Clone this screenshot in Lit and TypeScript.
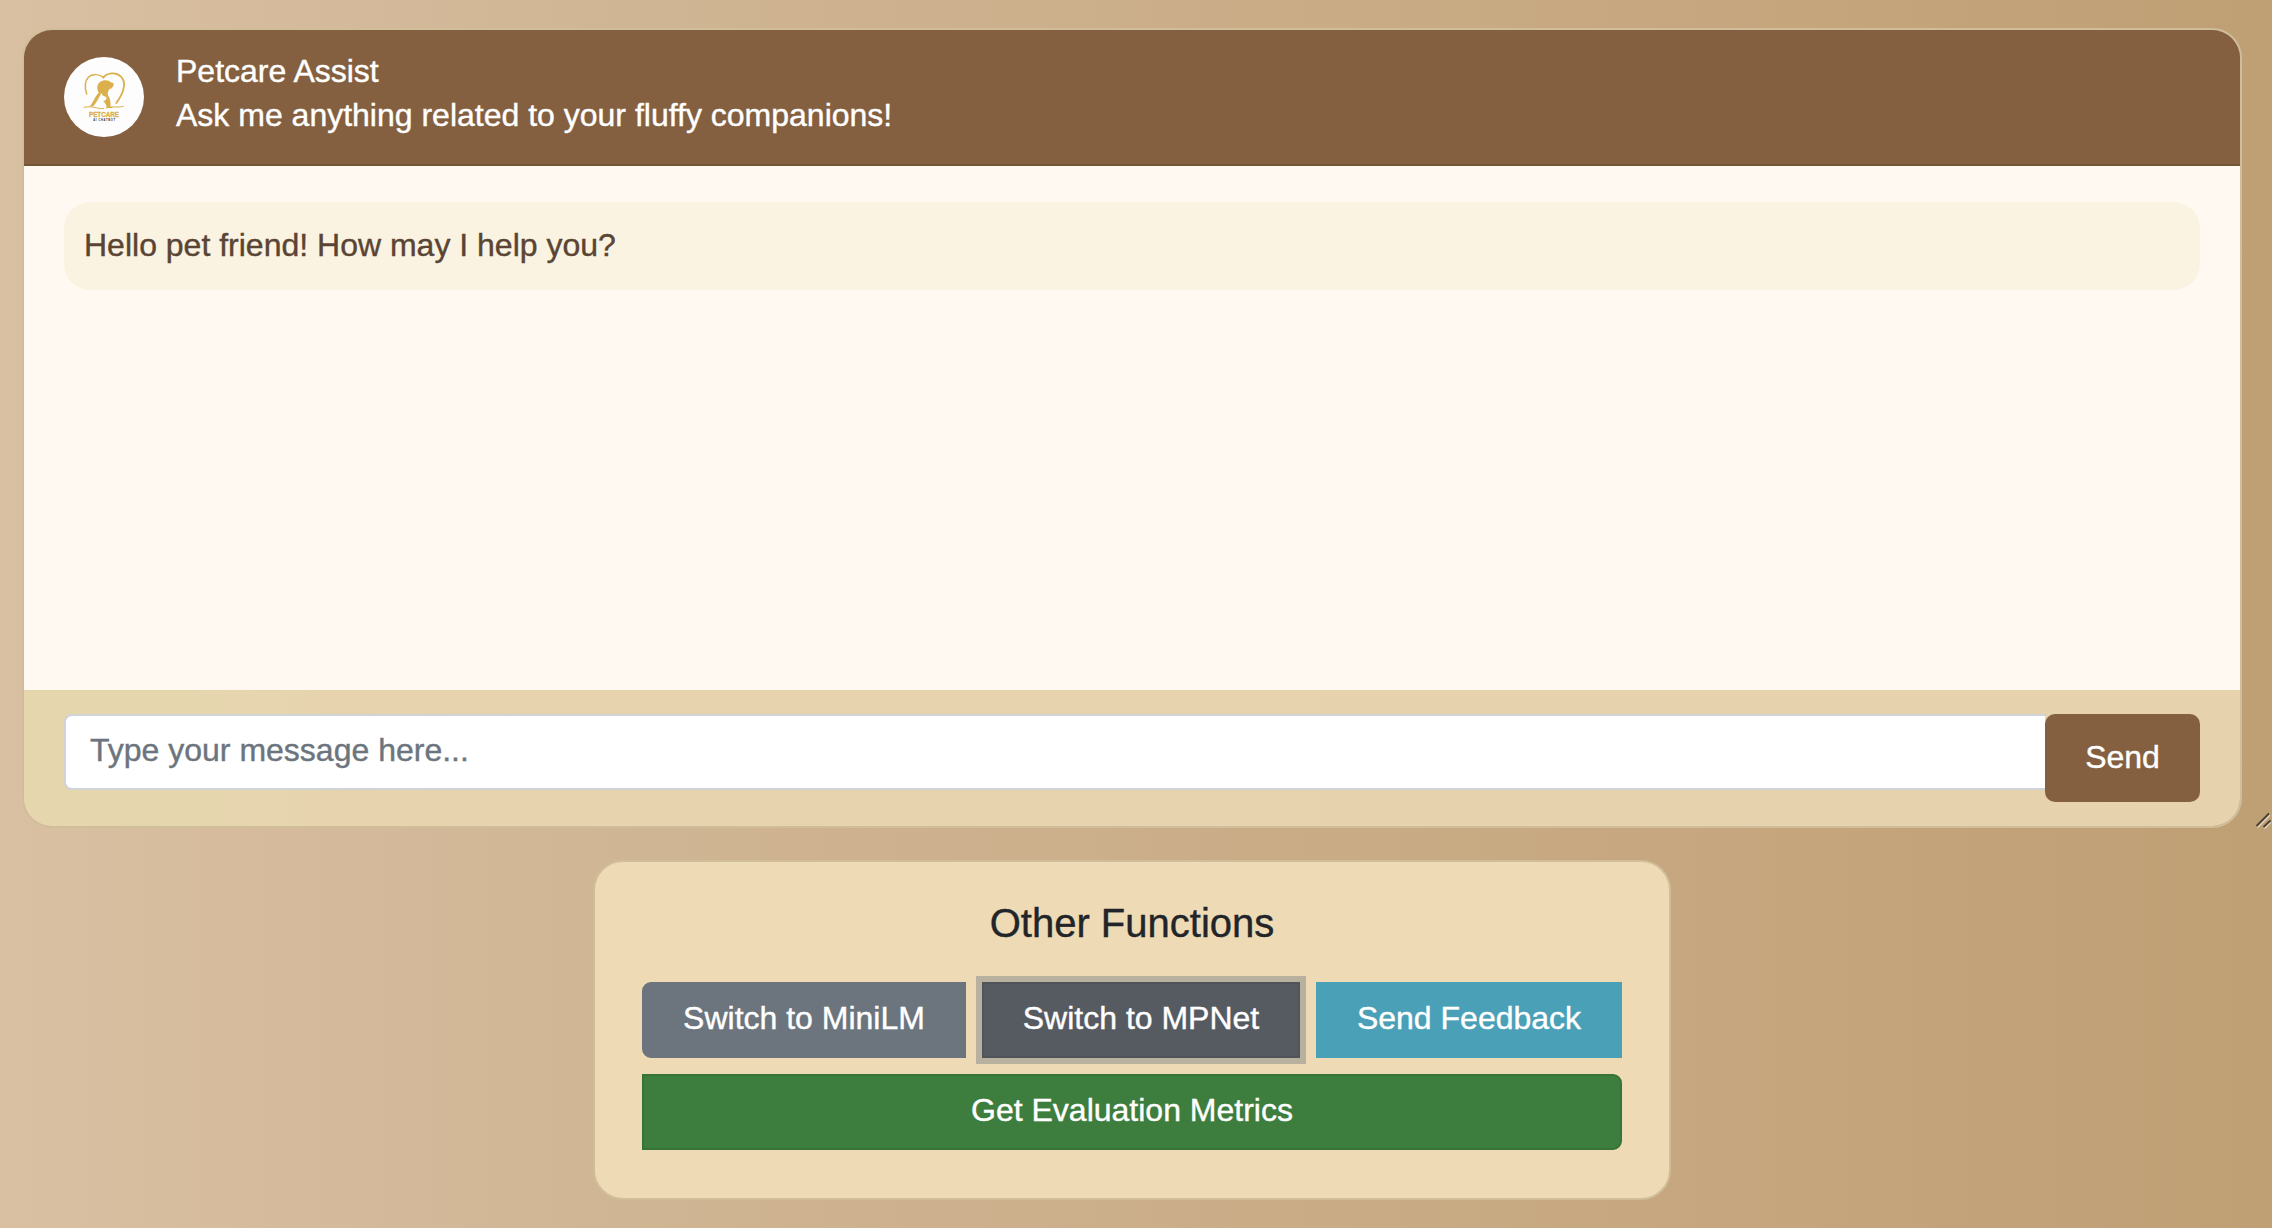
import { LitElement, html, css, svg } from "lit";
import { customElement } from "lit/decorators.js";

@customElement("pet-logo")
class PetLogo extends LitElement {
  static styles = css`
    :host { display: block; width: 80px; height: 80px; border-radius: 50%; background: #fdfdfe; overflow: hidden; }
    .art { display: block; width: 80px; height: 80px; }
    .line { fill: none; stroke: #dbb04c; stroke-linecap: round; }
    .solid { fill: #dbb04c; }
    .name { font: 700 19px "Liberation Sans", sans-serif; fill: #dbb04c; stroke: #dbb04c; stroke-width: .8; }
    .sub { font: 700 8px "Liberation Sans", sans-serif; fill: #333; }
  `;
  render() {
    return html`<svg class="art" viewBox="0 0 240 240">${svg`
      <path class="line" stroke-width="4.5" d="M68 111 C62 92 63 72 73 61 C85 49 106 51 119 62"/>
      <path class="line" stroke-width="5.5" d="M118 61 C131 47 155 45 170 58 C187 73 183 103 157 138"/>
      <path class="solid" d="M102 104 C97 88 101 75 116 71 C126 68 137 71 140 76 L148 78 C151 86 146 94 135 97 C133 104 130 109 132 115 C139 126 141 138 139 149 L150 153 L129 153 C127 145 125 138 117 133 C126 130 130 125 126 120 L115 115 L113 108 C106 118 101 132 88 148 L76 149 C87 139 94 117 105 106 Z"/>
      <path class="line" stroke-width="3" d="M60 151 C82 145 98 156 119 155"/>
      <path class="line" stroke-width="3" d="M126 153 C145 145 159 154 178 148"/>
      <text class="name" x="75" y="179" textLength="90" lengthAdjust="spacingAndGlyphs">PETCARE</text>
      <text class="sub" x="88" y="192" textLength="65" lengthAdjust="spacing">AI CHATBOT</text>
    `}</svg>`;
  }
}

@customElement("app-root")
class AppRoot extends LitElement {
  static styles = css`
    :host {
      display: flex; flex-direction: column; box-sizing: border-box; position: relative;
      width: 2272px; height: 1228px; padding: 28px 30px 0 22px; gap: 32px; overflow: hidden;
      background: linear-gradient(90deg, #d9c0a2 0%, #d0b594 28%, #c6a77f 73%, #bf9f74 100%);
      font-family: "Liberation Sans", Arial, sans-serif; font-size: 32px; line-height: 44px; color: #212529;
      -webkit-text-stroke: 0.4px currentColor;
    }
    * { box-sizing: border-box; }
    .card { border: 2px solid #d0be9a; border-radius: 30px; overflow: hidden; display: flex; flex-direction: column; }
    .chat { height: 800px; flex: none; }
    .head { height: 136px; flex: none; background: #846040; border-bottom: 2px solid #765436; color: #fff; display: flex; padding: 19px 40px 0; gap: 32px; }
    .logo { margin-top: 8px; flex: none; -webkit-text-stroke: 0; }
    .body { flex: 1; background: #fff9f1; padding: 36px 40px; }
    .msg { height: 88px; border-radius: 26px; background: #fbf3e2; color: #5a4433; padding: 21px 20px; }
    .foot { height: 136px; flex: none; display: flex; align-items: flex-start; padding: 24px 40px; background: linear-gradient(90deg, #e6d6ae 0%, #e6d6ae 8%, #e7d3ae 16%, #e6d2ac 100%); }
    .field { flex: 1; height: 76px; background: #fff; border: 2px solid #ced4da; border-right: 0; border-radius: 8px 0 0 8px; padding: 12px 24px; color: #6c757d; }
    .send { width: 155px; height: 88px; border: 0; border-radius: 10px; background: #846040; color: #fff; font: inherit; padding: 0 0 3px; }
    .other { width: 1078.66px; height: 340px; align-self: center; background: #eedab4; padding: 37px 47.33px 0; align-items: stretch; flex: none; }
    .title { margin: 0; font-size: 40px; font-weight: 400; line-height: 48px; text-align: center; }
    .row { display: flex; justify-content: space-between; margin-top: 35px; }
    .btn { height: 76px; border: 2px solid transparent; padding: 0 0 4px; font: inherit; color: #fff; }
    .mini { width: 324px; background: #6c757d; border-color: #6c757d; border-radius: 9px 0 0 9px; }
    .mpnet { width: 318px; background: #565b62; border-color: #50555b; box-shadow: 0 0 0 6px #b8b1a0; }
    .feed { width: 306px; background: #4aa0b6; border-color: #4aa0b6; }
    .eval { margin-top: 16px; background: #3d7d3d; border-color: #38743a; border-radius: 0 9px 9px 0; }
    .grip { position: absolute; right: 0; bottom: 399px; width: 18px; height: 18px; }
    .dark { stroke: #4a4034; stroke-width: 1.8; }
    .lite { stroke: #e6d9c6; stroke-width: 1.5; }
  `;
  render() {
    return html`
      <section class="card chat">
        <header class="head">
          <pet-logo class="logo"></pet-logo>
          <div class="intro"><div>Petcare Assist</div><div>Ask me anything related to your fluffy companions!</div></div>
        </header>
        <main class="body"><div class="msg">Hello pet friend! How may I help you?</div></main>
        <footer class="foot"><div class="field">Type your message here...</div><button class="send">Send</button></footer>
      </section>
      <section class="card other">
        <h5 class="title">Other Functions</h5>
        <div class="row">
          <button class="btn mini">Switch to MiniLM</button>
          <button class="btn mpnet">Switch to MPNet</button>
          <button class="btn feed">Send Feedback</button>
        </div>
        <button class="btn eval">Get Evaluation Metrics</button>
      </section>
      <svg class="grip" viewBox="0 0 18 18">
        <path class="lite" d="M3.5 16.5 L16 4 M10.5 17.5 L17 11"/>
        <path class="dark" d="M2.5 15 L15 2.5 M9.5 16 L16.5 9.5"/>
      </svg>
    `;
  }
}
